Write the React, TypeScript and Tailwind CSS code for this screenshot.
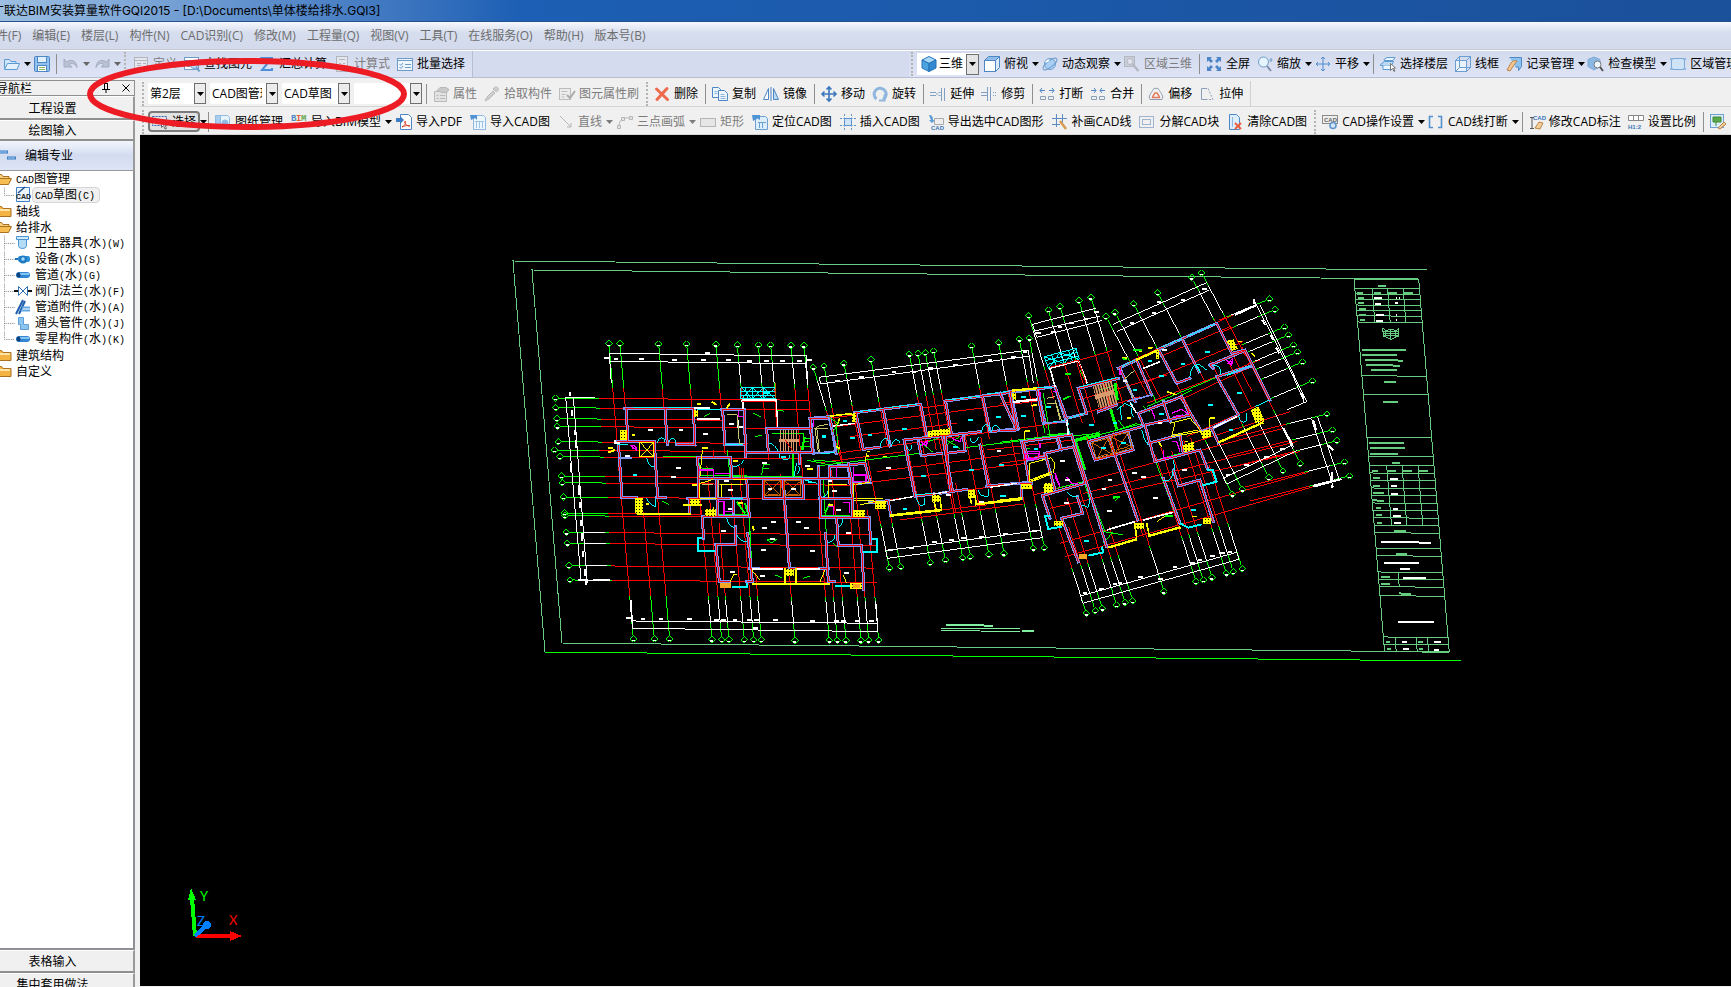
import React from 'react';

const BLUE = '#4f86c6';
const LIGHT = '#bcd9f2';

/* ---------- toolbar icons, all on a 16 x 16 grid ---------- */

const ICONS: Record<string, React.ReactNode> = {
  open: (
    <g stroke="#5b9bd5" fill="#cfe6fa">
      <path d="M.5 12.5v-9h5l1.5 2h5v2" />
      <path d="M.5 13.5l3-6h12l-2.5 6z" fill="#e3f1fd" />
    </g>
  ),
  save: (
    <g stroke={BLUE}>
      <rect x=".5" y=".5" width="15" height="15" rx="1" fill="#8fc1ec" />
      <rect x="3.5" y=".5" width="9" height="6" fill="#dff0fc" />
      <rect x="3.5" y="9.5" width="9" height="6" fill="#fff" />
      <path d="M5 11.5h6M5 13.5h6" stroke="#8ab86a" />
    </g>
  ),
  undo: <path d="M1 3v8h8L6 8.500c3-2 6-1 8 3C14 5 8 2.5 3.5 6z" fill="#b9c2d2" stroke="#a4aec0" />,
  redo: <path d="M15 3v8H7l3-2.5c-3-2-6-1-8 3C2 5 8 2.5 12.5 6z" fill="#b9c2d2" stroke="#a4aec0" />,
  define: (
    <g stroke="#b1b5bf" fill="#e4e6ec">
      <rect x="1.5" y="1.5" width="13" height="13" />
      <path d="M1.5 4.5h13M4 7.5h4M4 9.5h4M4 11.5h4M10 7.5h3M10 11.5h3" />
    </g>
  ),
  find: (
    <g stroke="#6d9cc9" fill="#fff">
      <rect x=".5" y="1.5" width="14" height="12" />
      <path d="M.5 4.5h14M3 7.5h3M3 10.5h3" />
      <circle cx="10" cy="9" r="3.5" fill={LIGHT} />
      <path d="M12.5 11.5l3 4" strokeWidth="2" />
    </g>
  ),
  sigma: <path d="M13 4V2H3l5 6-5 6h10v-2" fill="none" stroke="#4a90d9" strokeWidth="2" />,
  calc: (
    <g stroke="#b1b5bf" fill="#e4e6ec">
      <rect x="2.5" y=".5" width="11" height="15" />
      <path d="M5 3.5h6M5 7.5h2M9 7.5h2M5 10.5h2M9 10.5h2M5 13h2M9 13h2" />
    </g>
  ),
  batch: (
    <g stroke="#6d9cc9" fill="#eef6fd">
      <rect x=".5" y="2.5" width="15" height="12" />
      <path d="M.5 4.5h15M8 8.5h6M8 11.5h6M2.5 8l1.5 1.5L6 7M2.5 11l1.5 1.5L6 10" />
    </g>
  ),
  cube: (
    <g stroke="#2672b8" strokeLinejoin="round">
      <path d="M8 .5l7 3.5-7 3.5L1 4z" fill="#a8d8f7" />
      <path d="M1 4l7 3.5v8L1 12z" fill="#4ba3e0" />
      <path d="M15 4L8 7.5v8l7-3.5z" fill="#3389cf" />
    </g>
  ),
  topview: (
    <g stroke={BLUE} fill="#fff">
      <path d="M.5 4.5l4-4h11l-4 4z" fill="#8dbde8" />
      <path d="M11.5 4.5l4-4v11l-4 4z" fill="#dbeaf7" />
      <rect x=".5" y="4.5" width="11" height="11" />
    </g>
  ),
  orbit: (
    <g stroke="#6f9fce">
      <circle cx="8" cy="8" r="5.5" fill="#a9d0f2" />
      <ellipse cx="8" cy="8" rx="8.5" ry="3" fill="none" transform="rotate(-38 8 8)" />
      <path d="M4 6l3-2" stroke="#fff" strokeWidth="2" />
    </g>
  ),
  area3d: (
    <g stroke="#b3b8c3" fill="#c9cdd7">
      <rect x=".5" y=".5" width="10" height="10" />
      <circle cx="6" cy="5.5" r="3" fill="#dfe2ea" />
      <path d="M8.5 8l6 7" strokeWidth="2.5" />
    </g>
  ),
  full: (
    <path
      d="M1 1h5L4.5 2.5 7 5 5 7 2.5 4.5 1 6zM15 1v5l-1.5-1.5L11 7 9 5l2.5-2.5L10 1zM1 15v-5l1.5 1.5L5 9l2 2-2.5 2.5L6 15zM15 15h-5l1.5-1.5L9 11l2-2 2.5 2.5L15 10z"
      fill="#4c86c8"
    />
  ),
  zoom: (
    <g stroke="#6f9cc8">
      <circle cx="6.5" cy="6" r="5" fill="#e6f4fd" />
      <path d="M10 10l4 5" stroke="#7b8ea5" strokeWidth="2" />
      <path d="M14 2v4M12.5 4h3" />
    </g>
  ),
  pan: <path d="M8 1v14M1 8h14M6 3l2-2 2 2M6 13l2 2 2-2M3 6L1 8l2 2M13 6l2 2-2 2" fill="none" stroke="#4c8ccf" />,
  move: <path d="M8 1v14M1 8h14M5.5 3.5L8 1l2.5 2.5M5.5 12.5L8 15l2.5-2.5M3.5 5.5L1 8l2.5 2.5M12.5 5.5L15 8l-2.5 2.5" fill="none" stroke="#3b76bd" strokeWidth="1.6" />,
  floors: (
    <g stroke="#5d9bd3" fill="#eaf5fd">
      <path d="M4 3.5l3-2h8l-2 3H4z" />
      <path d="M.5 8.5l4-3h9l-2 4H.5z" fill={LIGHT} />
      <path d="M3 9.5v4h8v-4" />
      <path d="M10.5 7.5v7l2-2 1.5 3 1-.5-1.5-3h2z" fill="#fff" stroke="#777" />
    </g>
  ),
  wire: (
    <g stroke="#6b9fd4" fill="none">
      <rect x=".5" y="4.5" width="11" height="11" fill="#eaf3fc" />
      <rect x="4.5" y=".5" width="11" height="11" />
      <path d="M.5 4.5l4-4M11.5 4.5l4-4M.5 15.5l4-4M11.5 15.5l4-4" />
    </g>
  ),
  record: (
    <g>
      <path d="M3.5 1.5h12v9l-3 4V11h-3" fill="#8cc4ef" stroke={BLUE} />
      <path d="M1 14l4-7c1-2 4-3 6-2L8 9l-4 6z" fill="#f1c796" stroke="#b98245" />
    </g>
  ),
  check: (
    <g>
      <path d="M6 1l6 2.5v7L6 14 0 10.5v-7z" fill="#8bb9e3" stroke="#7fa9d3" />
      <circle cx="9.5" cy="8.5" r="3.5" fill="#eaf5fd" stroke="#777" />
      <path d="M12 11l3 4" stroke="#555" strokeWidth="2" />
    </g>
  ),
  area: (
    <g stroke="#7ba7d6" fill="#cfe3f6">
      <rect x="1.5" y="2.5" width="13" height="11" />
      <path d="M0 2h3v2H0zM13 2h3v2h-3zM0 12h3v2H0zM13 12h3v2h-3z" fill="#8db8e4" stroke="none" />
    </g>
  ),
  props: (
    <g stroke="#b9b9b9" fill="#e2e2e2">
      <path d="M1.5 5.5h12v10h-12z" />
      <path d="M4 4.5l3-3h6l3 2-2 3H9z" fill="#c9c9c9" />
      <path d="M3.5 9.5h2M7 9.5h5M3.5 12.5h2M7 12.5h5" />
    </g>
  ),
  pick: <path d="M1 15l2-4 6-6 2 2-6 6zM9 3l1.5-1.5c2-1.5 5 1 3.500 3L12.5 6z" fill="#cfcfcf" stroke="#b9b9b9" />,
  brush: (
    <g stroke="#bcbcbc" fill="#ececec">
      <rect x=".5" y="2.5" width="11" height="11" />
      <path d="M2.5 5.5h6M2.5 8.5h4M2.5 11h3" />
      <path d="M8 9l3 3 5-7" fill="none" stroke="#ababab" strokeWidth="2" />
    </g>
  ),
  remove: <path d="M2.5 3l11 10.5M13 2.5L3 13.5" stroke="#ef6a4d" strokeWidth="3" strokeLinecap="round" />,
  copy: (
    <g stroke={BLUE} fill="#eef6fd">
      <path d="M.5 1.5h6l3 3v7h-9z" />
      <path d="M6.5 4.5h6l3 3v7h-9z" />
      <path d="M8.5 8.5h4M8.5 10.5h5M8.5 12.5h5M2.5 5.5h3M2.5 7.5h3" stroke="#8ab4de" />
    </g>
  ),
  mirror: (
    <g stroke={BLUE}>
      <path d="M5.5 2.5v11h-5z" fill="#fff" />
      <path d="M10.5 2.5v11h5z" fill={LIGHT} />
      <path d="M8 1v14" />
    </g>
  ),
  rotate: (
    <g fill="none">
      <path d="M4.5 13A6 6 0 1 1 11 13.5" stroke="#8fb6de" strokeWidth="3" />
      <path d="M12.5 8.5V14.5H7" stroke="#8fb6de" strokeWidth="2" />
    </g>
  ),
  extend: <path d="M0 6.5h6M0 9.5h6M6 8h2M8.5 6.5h2M8.5 9.5h2M11.5 2v13M14.5 2v13" stroke="#7f9fc4" />,
  trim: <path d="M0 6.5h6M0 9.5h6M6.5 1v14M9.5 1v14M12 6.5h1M14 6.5h1M12 9.5h1M14 9.5h1" stroke="#7f9fc4" />,
  breakIt: (
    <g stroke={BLUE} fill="none">
      <path d="M6 4.5H1M3 2L1 4.5 3 7M10 4.5h5M13 2l2 2.5L13 7" />
      <path d="M1.5 10.5h5v3h-5zM9.5 10.5h5v3h-5z" stroke="#8aa0b8" />
    </g>
  ),
  join: (
    <g stroke={BLUE} fill="none">
      <path d="M1 4.5h5M4 2l2 2.5L4 7M15 4.5h-5M12 2l-2 2.5L12 7" />
      <path d="M1.5 10.5h5v3h-5zM9.5 10.5h5v3h-5z" stroke="#8aa0b8" />
    </g>
  ),
  offset: (
    <g fill="none">
      <path d="M2 13.5C0 10 3 7.5 4.5 4.5c1-3 6-3 7 0C13 7.5 16 10 14 13.5z" stroke="#8c9db3" />
      <path d="M4.5 11.5c0-2 2-3 2.5-4.5h2c.5 1.5 2.5 2.5 2.5 4.5z" stroke="#e27a5d" strokeWidth="1.5" />
    </g>
  ),
  stretch: (
    <g fill="none" stroke="#8a9fb8">
      <path d="M8 2.5H2.5v11H8" />
      <path d="M9 2.5l5 11H8" strokeDasharray="2 1.5" />
    </g>
  ),
  select: (
    <g fill="none">
      <rect x=".5" y="2.5" width="14" height="9" stroke="#2f66b0" strokeDasharray="2 1" />
      <path d="M9.5 5.5v8l2-2 1.5 3.5 1.5-.5-1.5-3.5h2.5z" fill="#fff" stroke="#666" />
    </g>
  ),
  sheets: (
    <g stroke="#8fbbe4">
      <path d="M.5 1.5h6v13h-6z" fill="#a9cdee" />
      <path d="M5.5 1.5h7l2 2v11h-9z" fill="#e7f3fd" />
      <circle cx="10" cy="9" r="3" fill="#8cbde8" />
    </g>
  ),
  bim: (
    <g fontFamily="Liberation Mono" fontSize="9" fontWeight="700">
      <text x="0" y="7" fill="#4f86c6">B</text>
      <text x="5" y="7" fill="#e0603f">I</text>
      <text x="10" y="7" fill="#6aa84f">M</text>
      <path d="M2 10.5h11M2 13.5h11" stroke="#9fb9d6" />
    </g>
  ),
  pdf: (
    <g>
      <path d="M4.5.5h8l3 3v12h-11z" fill="#fff" stroke={BLUE} />
      <path d="M0 4h4V2l4 4-4 4V8H0z" fill="#3e7cc4" />
      <path d="M6 13c4-2 4-5 3-6-1 3 2 5 5 5-3-1-6 0-8 1z" fill="none" stroke="#d9442b" />
    </g>
  ),
  importCad: (
    <g stroke="#8db8e2" fill="#eef6fd">
      <path d="M3.5 1.5h10l2 2v12h-12z" />
      <path d="M6.5 7v7M9.5 7v7M12.5 7v7M5 7.5h9" stroke="#9cc3e8" />
      <path d="M0 1h7v5L5 4 1 6z" fill="#4f94d4" stroke="none" />
    </g>
  ),
  line: <path d="M2 2l11 11M13 9v4H9" fill="none" stroke="#b5b5b5" />,
  arc: (
    <g fill="#e6e6e6" stroke="#b5b5b5">
      <path d="M2 12C2 6 6 3 13 4" fill="none" />
      <path d="M.5 11.5h3v3h-3zM4.5 3.5h3v3h-3zM12.5 2.5h3v3h-3z" />
    </g>
  ),
  rect: <rect x=".5" y="4.5" width="15" height="8" fill="#e6e6e6" stroke="#b5b5b5" />,
  locate: (
    <g stroke="#6fa0d2" fill="#dcedfb">
      <path d="M3.5 2.5h10l2 2v11h-12z" />
      <path d="M7.5 8v6M10.5 8v6M6 8.5h8" />
      <path d="M0 1h8v5L5.5 4.5 1 7z" fill="#4f94d4" stroke="none" />
    </g>
  ),
  insert: (
    <g stroke="#5f95cc">
      <path d="M4.5 0v16M11.5 0v16M0 4.5h16M0 11.5h16" strokeDasharray="2 1.5" />
      <rect x="4.5" y="4.5" width="7" height="7" fill="#cfe3f6" />
    </g>
  ),
  exportCad: (
    <g>
      <path d="M1 1c3 0 4 2 4 5h2L4 9 1 6h2z" fill="#5b9bd5" />
      <path d="M6.5 4.5h9v6h-9z" fill="#eee" stroke="#aaa" />
      <text x="3" y="15.5" fontSize="6" fontWeight="700" fontFamily="Liberation Sans" fill="#3974b8">CAD</text>
    </g>
  ),
  patch: (
    <g>
      <path d="M4.5 0v13M10.5 0v9M0 4.5h15M0 10.5h8" stroke="#5c8cc2" />
      <path d="M8 7l6 8" stroke="#d69a52" strokeWidth="2.5" />
    </g>
  ),
  explode: (
    <g fill="none" stroke="#4f78b0" strokeDasharray="1 1">
      <rect x=".5" y="2.5" width="14" height="11" />
      <rect x="3.5" y="5.5" width="8" height="5" />
    </g>
  ),
  clear: (
    <g>
      <path d="M2.5.5h7l3 3v12h-10z" fill="#dcedfb" stroke={BLUE} />
      <path d="M5.5 3v10" stroke="#8cb8e2" />
      <path d="M8 9l6 6M14 9l-6 6" stroke="#e9603f" strokeWidth="2" />
    </g>
  ),
  cadSet: (
    <g>
      <rect x=".5" y="1.5" width="15" height="8" fill="#eee" stroke="#8b8b8b" />
      <text x="2" y="8" fontSize="6" fontWeight="700" fontFamily="Liberation Sans" fill="#666">CAD</text>
      <circle cx="11" cy="11.5" r="3" fill="#d6e8f8" stroke="#5f95cc" strokeWidth="1.6" />
    </g>
  ),
  brackets: <path d="M5 2.5H1.5v11H5M10 2.5h3.500v11H10" fill="none" stroke="#5590cf" strokeWidth="1.6" />,
  annotate: (
    <g>
      <path d="M1 3.5h4M3 3.5v11M1 14.5h4" stroke="#555" />
      <text x="4" y="5.5" fontSize="6" fontWeight="700" fontFamily="Liberation Sans" fill="#3974b8">CAD</text>
      <path d="M6 14l4-6 4 1-3 6z" fill="#f3cf9c" stroke="#b98245" />
    </g>
  ),
  ratio: (
    <g>
      <path d="M.5 1.5h15v5H.5zM5.5 1.5v5M10.5 1.5v5" fill="#fff" stroke="#888" />
      <text x="0" y="15" fontSize="6" fontWeight="700" fontFamily="Liberation Sans Narrow, Liberation Sans" fill="#3974b8">H1:2</text>
    </g>
  ),
  edit: (
    <g>
      <rect x=".5" y=".5" width="13" height="13" fill="#dcedfb" stroke="#6ea0d2" />
      <path d="M3 3h8v5H3zM6 8v4" fill="#5aa84a" stroke="#3f8a34" />
      <path d="M8 14l6-6 2 2-6 5z" fill="#f3cf9c" stroke="#b98245" />
    </g>
  ),
  /* component tree */
  folder: (
    <g stroke="#a9701d">
      <path d="M.5 13.5v-10h5l1.5 2h8v8z" fill="#f3b444" />
      <path d="M2 7h12" stroke="#fde3a4" strokeWidth="2" />
    </g>
  ),
  folderOpen: (
    <g stroke="#a9701d">
      <path d="M.5 13.5v-10h5l1.5 2h6v3" fill="#f8cf7c" />
      <path d="M.5 13.5l3-6h12l-3 6z" fill="#f6bd52" />
    </g>
  ),
  draft: (
    <g>
      <path d="M1.5.5h13v14h-13z" fill="#eaf5fd" stroke="#3f80c8" />
      <path d="M3 6l7-6" stroke="#1f4f8f" strokeWidth="1.5" />
      <text x="1" y="12" fontSize="7" fontWeight="700" fontFamily="Liberation Sans" fill="#222">CAD</text>
    </g>
  ),
  sanitary: (
    <g stroke="#4c93d4">
      <path d="M1.5 1.5h12v3h-12z" fill="#cfe9fb" />
      <path d="M3.5 4.5v6c0 4 8 4 8 0v-6z" fill="#b3dcf7" />
    </g>
  ),
  device: (
    <g>
      <path d="M0 8h6" stroke="#1e74b8" strokeWidth="2" />
      <rect x="3" y="5" width="12" height="6" rx="2" fill="#2d8fd8" />
      <circle cx="8" cy="8.5" r="4" fill="#1f7ac2" />
      <circle cx="8" cy="8" r="1.8" fill="#a5dafa" />
    </g>
  ),
  pipe: (
    <g>
      <rect x="1" y="5" width="14" height="6" rx="3" fill="#2f86d4" />
      <path d="M5 7h9" stroke="#a5d8fa" strokeWidth="1.5" />
      <ellipse cx="3.5" cy="8" rx="2" ry="2.5" fill="#0f3f7c" />
    </g>
  ),
  valve: (
    <g>
      <path d="M-1 8h4M13 8h4" stroke="#111" strokeWidth="2" />
      <path d="M3.5 3.5v9l9-9v9z" fill="#fff" stroke="#2f6fb5" />
    </g>
  ),
  attach: (
    <g>
      <path d="M1 15L8 1M4 15l6-13" stroke="#1f5fae" strokeWidth="2" />
      <path d="M7 8.5h8M6 11.5h9" stroke="#5fa6e2" strokeWidth="2" />
    </g>
  ),
  elbow: <path d="M3.5 2.5h5v7h5v5h-8v-5h-2z" fill="#8cc4f0" stroke="#5fa0da" />,
};

function Icon({ name }: { name: string }) {
  return (
    <svg viewBox="0 0 16 16" className="h-4 w-4 shrink-0 overflow-visible" aria-hidden="true">
      {ICONS[name]}
    </svg>
  );
}

function Caret() {
  return (
    <svg viewBox="0 0 7 4" className="h-1 w-[7px] shrink-0" aria-hidden="true">
      <path d="M0 0h7L3.5 4z" fill="currentColor" />
    </svg>
  );
}

interface ToolProps {
  icon: string;
  label: string;
  off?: boolean;
  caret?: boolean;
}

function Tool({ icon, label, off, caret }: ToolProps) {
  return (
    <button
      disabled={off}
      className={`flex h-5 shrink-0 items-center gap-1 ${caret ? 'pr-[3px]' : 'pr-[7px]'} ${off ? 'text-[#7c7c7c]' : 'text-black'}`}
    >
      <Icon name={icon} />
      <span>{label}</span>
      {caret && <Caret />}
    </button>
  );
}

const Tools = ({ items }: { items: ToolProps[] }) => (
  <>
    {items.map((item) => (
      <Tool key={item.label} {...item} />
    ))}
  </>
);

const Divider = () => <span className="mr-[6px] h-5 w-px shrink-0 bg-[#8e8e8e]" />;
const Grip = () => <span className="mr-1 h-6 w-0 shrink-0 border-l-2 border-dotted border-[#b4b4b4]" />;

function Picker({ label, value, width }: { label: string; value: string; width: string }) {
  return (
    <label className="mr-1 flex h-[22px] shrink-0 items-center">
      <select aria-label={label} defaultValue={value} className={`h-[21px] appearance-none bg-white pl-[2px] pr-1 text-black ${width}`}>
        <option>{value}</option>
      </select>
      <span className="flex h-[21px] w-3 items-center justify-center border border-[#707070] bg-[#ececec]">
        <Caret />
      </span>
    </label>
  );
}

const MENUS = ['文件(F)', '编辑(E)', '楼层(L)', '构件(N)', 'CAD识别(C)', '修改(M)', '工程量(Q)', '视图(V)', '工具(T)', '在线服务(O)', '帮助(H)', '版本号(B)'];

/* ---------- navigation tree ---------- */

interface Node {
  icon: string;
  label: string;
  child?: boolean;
  last?: boolean;
  active?: boolean;
}

const TREE: Node[] = [
  { icon: 'folderOpen', label: 'CAD图管理' },
  { icon: 'draft', label: 'CAD草图(C)', child: true, last: true, active: true },
  { icon: 'folder', label: '轴线' },
  { icon: 'folderOpen', label: '给排水' },
  { icon: 'sanitary', label: '卫生器具(水)(W)', child: true },
  { icon: 'device', label: '设备(水)(S)', child: true },
  { icon: 'pipe', label: '管道(水)(G)', child: true },
  { icon: 'valve', label: '阀门法兰(水)(F)', child: true },
  { icon: 'attach', label: '管道附件(水)(A)', child: true },
  { icon: 'elbow', label: '通头管件(水)(J)', child: true },
  { icon: 'pipe', label: '零星构件(水)(K)', child: true, last: true },
  { icon: 'folder', label: '建筑结构' },
  { icon: 'folder', label: '自定义' },
];

// latin letters take half the width of a chinese one
function HalfWidth({ text }: { text: string }) {
  return (
    <>
      {text.split(/([A-Z()]+)/).map((part, i) =>
        /^[A-Z()]/.test(part) ? (
          <span key={i} className="font-['Liberation_Mono','Noto_Sans_CJK_SC',monospace] text-[10px]">{part}</span>
        ) : (
          part
        )
      )}
    </>
  );
}

function TreeRow({ node }: { node: Node }) {
  return (
    <li className="flex h-4 items-center whitespace-nowrap">
      {node.child ? (
        <svg viewBox="0 0 12 16" className="ml-1 h-4 w-[11px] shrink-0" aria-hidden="true">
          <path d={node.last ? 'M.5 0v8.5h12' : 'M.5 0v16M.5 8.5h12'} fill="none" stroke="#777" strokeDasharray="1 1" />
        </svg>
      ) : (
        <span className="-ml-1" />
      )}
      <Icon name={node.icon} />
      <button
        className={`ml-px flex h-4 items-center leading-4 ${
          node.active ? 'rounded-sm border border-[#d5d5d5] bg-[#f0f0f0] pl-[2px] pr-1' : 'px-[3px]'
        }`}
      >
        <span>
          <HalfWidth text={node.label} />
        </span>
      </button>
    </li>
  );
}

function Sidebar() {
  const tab = 'flex shrink-0 items-center justify-center border-b-2 border-r-2 border-t border-b-[#8f8f8f] border-r-[#9a9a9a] border-t-white bg-[#f0f0f0] pr-7';
  return (
    <aside className="flex w-[135px] shrink-0 flex-col overflow-hidden bg-[#f0f0f0] font-['Noto_Sans_CJK_SC',sans-serif] text-black">
      <header className="mt-px flex h-4 shrink-0 items-center border border-l-0 border-[#8f8f8f]">
        <span className="-ml-1">导航栏</span>
        <button aria-label="固定" className="ml-auto mr-3">
          <svg viewBox="0 0 8 10" className="h-[10px] w-2">
            <path d="M2 .5h4M2.5 1v5M5.5 1v5M0 6.5h8M4 7v3" stroke="#000" fill="none" />
          </svg>
        </button>
        <button aria-label="关闭" className="mr-1">
          <svg viewBox="0 0 8 8" className="h-2 w-2">
            <path d="M.5.5l7 7M7.5.5l-7 7" stroke="#000" />
          </svg>
        </button>
      </header>
      <button className={`${tab} h-6`}>工程设置</button>
      <button className={`${tab} h-[21px]`}>绘图输入</button>
      <div className="flex h-[30px] shrink-0 items-center border-b border-r-2 border-[#9a9a9a] bg-gradient-to-b from-[#f2f5fc] via-[#d3dcf0] to-[#dde4f6] pt-px font-['Open_Sans','Noto_Sans_CJK_SC',sans-serif]">
        <svg viewBox="0 0 16 16" className="h-4 w-4" aria-hidden="true">
          <path d="M0 4h8M7 10h9" stroke="#3c7cc4" strokeWidth="3" />
          <path d="M0 4h7M8 10h7" stroke="#a5d0f5" />
        </svg>
        <span className="ml-[9px]">编辑专业</span>
      </div>
      <ul className="min-h-0 flex-1 border-b-2 border-r-2 border-[#8f8f96] bg-white">
        {TREE.map((node) => (
          <TreeRow key={node.label} node={node} />
        ))}
      </ul>
      <button className={`${tab} h-[23px]`}>表格输入</button>
      <button className={`${tab} -mb-[9px] h-[23px]`}>集中套用做法</button>
    </aside>
  );
}

/* ---------- drawing ---------- */

type Pt = [number, number, number?];

// a family of parallel axes: bubble, green leader, white extension, red centre line
interface Run {
  dir: [number, number];
  green: number;
  white: number;
  red: number;
  at: Pt[];
}

function Axes({ dir, green, white, red, at }: Run) {
  const seg = (a: number, b: (p: Pt) => number) =>
    at.map((p) => `M${p[0] + dir[0] * a},${p[1] + dir[1] * a}L${p[0] + dir[0] * b(p)},${p[1] + dir[1] * b(p)}`).join('');
  return (
    <g fill="none" strokeWidth="3">
      <path stroke="#f00" d={seg(white, (p) => p[2] ?? red)} />
      <path stroke="#fff" d={seg(green, () => white)} />
      <path stroke="#0f0" d={seg(10, () => green) + seg(white, () => white + 12)} />
      <path stroke="#0f0" d={at.map(([x, y]) => `M${x - 10},${y}l10,-10l10,10l-10,10z`).join('')} />
      <path stroke="#fff" strokeWidth="4" d={at.map(([x, y]) => `M${x - 5},${y + 5}h9`).join('')} />
    </g>
  );
}

function Walls({ d }: { d: string }) {
  return (
    <g fill="none">
      <path d={d} stroke="#7f93f7" strokeWidth="9" strokeLinecap="square" />
      <path d={d} stroke="#f00" strokeWidth="3" />
    </g>
  );
}

const Stroke = ({ c, d, w = 3 }: { c: string; d: string; w?: number }) => <path d={d} stroke={c} strokeWidth={w} fill="none" />;

// short dashes standing for room names and dimension figures
const Marks = ({ c, at }: { c: string; at: Pt[] }) => (
  <path d={at.map(([x, y]) => `M${x - 7},${y}h14`).join('')} stroke={c} strokeWidth="6" />
);

function BlockA() {
  return (
    <g transform="translate(500 250) scale(.3333)">
      <Axes dir={[0.083, 1]} green={122} white={122} red={300} at={[[327, 281, 460], [360, 281, 290], [476, 282, 300], [560, 282, 310], [648, 283, 330]]} />
      <Axes dir={[0.09, 1]} green={50} white={115} red={300} at={[[712, 285, 160], [775, 285, 345], [812, 285, 160], [873, 286, 400], [912, 286, 240]]} />
      <Axes dir={[-0.085, -1]} green={50} white={118} red={300} at={[[400, 1167, 520], [636, 1168, 470], [665, 1169, 520], [687, 1169, 350], [733, 1169, 470], [761, 1169, 520], [784, 1169, 200], [885, 1171, 500], [988, 1171, 370], [1012, 1171, 180], [1038, 1171, 510], [1083, 1171, 370], [1106, 1171, 470], [1136, 1171, 390]]} />
      <Axes dir={[-0.085, -1]} green={118} white={118} red={380} at={[[463, 1167, 380], [509, 1167, 520]]} />
      <Axes dir={[1, 0.009]} green={120} white={120} red={750} at={[[166, 444, 760], [167, 473, 760], [171, 506, 500], [172, 529, 760], [175, 575, 570], [164, 600, 600], [180, 620, 720], [184, 678, 770], [187, 698, 870], [191, 741, 870], [193, 789, 410], [195, 797, 870]]} />
      <Axes dir={[1, 0.008]} green={50} white={115} red={900} at={[[199, 847, 910], [202, 880, 930], [207, 947, 915], [210, 990, 920]]} />
      <Stroke c="#fff" d="M328,310L920,318M328,334L920,341M197,440L243,990M220,440L262,1000M393,1113L1130,1120M397,1135L1133,1145M395,1050L397,1135M918,318L924,405M195,442H285M1128,1060L1134,1145M328,310L334,400" />
      <Stroke c="#fff" w={6} d="M210,425v14M217,480v18M224,540v15M227,570v25M213,640v25M236,705v30M240,755v18M243,810v18M246,850v22M250,903v18M255,957v20M257,990v15M235,990h30M280,990h50" />
      <Marks c="#fff" at={[[319, 323], [348, 327], [424, 327], [523, 330], [610, 330], [686, 330], [622, 309], [748, 333], [800, 333], [848, 333], [898, 333], [928, 330], [385, 1104], [429, 1107], [483, 1107], [568, 1107], [650, 1110], [671, 1110], [705, 1110], [748, 1110], [770, 1110], [826, 1110], [937, 1113], [1010, 1113], [1031, 1113], [1071, 1113], [1115, 1113], [766, 1134]]} />
      <Stroke c="#0f0" d="M490,619H590M597,640L600,678H740M682,600L690,680M700,680H885M745,760L758,1000M748,800L758,1000M970,690L985,960M655,795H740M965,797H1050M815,550H910V600M900,590H930M910,565H930M910,575H928M790,645L785,675M790,645H810M790,655H806M940,630L1050,640M920,630L990,645M597,640L605,655H640" />
      <Stroke c="#0f0" w={6} d="M880,610V680M700,680H905M660,797H735M970,797H1045M735,760L745,795M975,790L990,760M915,560L905,600M710,755L735,790" />
      <Stroke c="#0f0" d="M760,490L783,500M830,480L853,484M612,500L630,490M485,752L508,764M800,870L815,878L830,868H800M825,975L845,983M910,985L930,978M1010,890L1000,880M985,500L1015,520L1000,545M765,560L785,555" />
      <Stroke c="#0ff" d="M610,863H595V903H645M695,1012H740V995M1112,868H1130V907H1085M1005,1008H1055M366,742H408M745,607H800" w={6} />
      <Stroke c="#0ff" d="M472,580C475,560 492,558 495,575M505,585C510,555 530,565 528,580M440,625C445,645 455,650 465,655M440,745C450,765 460,768 466,770V745M680,805C685,825 695,832 706,832M712,855C715,870 730,875 740,875M1030,805C1025,830 1015,832 1008,835M980,878C990,878 1003,875 1005,855M805,580C825,580 835,600 840,625M845,625C855,632 868,632 870,615M985,720C982,740 972,742 962,742M700,650C712,650 725,645 730,630M890,640L880,690M895,650C905,655 895,670 890,672M915,690L950,700" />
      <Stroke c="#0ff" d="M722,413H827V447H722zM722,425H827M722,436H827M735,413L745,447M757,413V447M790,413V447M725,413L757,447L790,413L825,447M757,413L725,447M825,413L790,447L757,413" />
      <Walls d="M375,475H583M378,475L384,572M495,477L502,583M580,475L585,583M350,575H465M355,575L366,742M463,575L473,742M366,742H410M470,742H498M530,583H585M665,480H733L737,620M668,480L675,585H737M737,607H805M800,537H935M800,537L805,607H938M930,505L937,607M930,505H985M592,623H692M592,623L597,685M692,625L695,683M597,685H1050M597,685V745M563,745H740M568,745V790M740,685L748,800M650,690L652,800M608,800H745M608,800L610,865M700,750V790M648,885H708V830M648,885L658,995H690M743,850L757,995H740M750,955H775M790,690V747H912L908,685M850,690L868,950M958,690L963,803H1108L1112,880M1055,690L1058,800M960,747H1058M960,955H985M977,850L985,995H1005M1010,803L1015,888H1085L1092,1020M955,650V685M900,607V640M990,650H1045M990,650V685M1045,640L1055,690M870,955H885" />
      <Stroke c="#0ff" d="M400,472H490M505,472H570M384,583H350M590,480H660M675,583H730M690,745H730" />
      <Stroke c="#fff" w={6} d="M727,450H828L832,530M727,450L730,478M590,508H660M582,474H630M755,957H850M890,957H960M345,570V580H360M715,510V530H728" />
      <Stroke c="#f00" d="M725,454H825L830,530M590,511H660M730,655V690M603,765V795M640,620V600M725,655V690" />
      <Stroke c="#ff0" w={6} d="M410,792H572M755,1003H990M855,955V1003M888,955V1003M410,745V792M635,455L650,465M680,475L690,460M590,462H603M605,595H625M550,765H605M577,705H590M395,555H405M325,608L345,600M325,595H340M758,828L762,842M437,763H447M920,658H940M700,632H715M985,765H998M715,760H728" />
      <Stroke c="#ff0" d="M600,680L607,600M598,745V700L620,695L640,688M420,577H462V621H420zM420,577L462,621M462,577L420,621M665,703V740M740,690H700M650,745H600M640,800V770M990,500L1060,490M690,995L700,975H712M1030,975L1040,1000M975,960L960,995M755,960L780,990M660,703H730M985,745V703H1040M1060,700L1060,740" />
      <path
        d="M360,540h22v30h-22zM406,745h22v45h-22zM570,748h30v20h-30zM615,778h34v20h-34zM853,957h30v20h-30zM1060,780h34v20h-34zM582,480h12v20h-12zM1050,1000h36v18h-36zM1055,490h10v24h-10z"
        fill="url(#hatch)"
      />
      <path d="M660,1000h32v14h-32zM1060,1003h20v12h-20z" fill="#f5a623" />
      <Stroke c="#c86000" d="M793,692H843V737H793zM793,692L843,737M843,692L793,737M855,692H903V737H855zM855,692L903,737M903,692L855,737M805,735H833M867,735H893M827,400L825,445" w={3} />
      <Stroke c="#c86000" d="M803,736H835M865,736H895" w={7} />
      <Stroke c="#d99a6c" d="M842,541V605M850,541V605M858,541V605M866,541V605M874,541V605M882,541V605M890,541V605" />
      <rect x="838" y="567" width="60" height="10" fill="#d99a6c" />
      <Stroke c="#f00" d="M855,570L880,605" />
      <Stroke c="#f0f" d="M598,660H640V680M645,670H690M655,755H672V795M675,785H700M1030,757H1048V790M985,770H1000V795M1010,650V680M1060,650V690M940,510V530M715,482V500H728M390,585L412,602M398,585L412,595M395,595H410" w={4} />
      <Stroke c="#c8c46a" d="M680,495H712L718,580H730M945,535H985M945,535L955,608M985,690V703M605,703H640M655,690V740" />
      <Stroke c="#7f93f7" w={5} d="M358,624H395M945,610L1008,603M985,500L1008,603" />
      <Marks c="#fff" at={[[451, 540], [543, 540], [616, 552], [535, 654], [520, 680], [694, 521], [382, 618], [670, 843], [820, 816], [793, 834], [895, 816], [919, 834], [937, 903], [790, 900], [697, 966], [787, 978], [691, 720], [690, 777], [922, 648], [793, 638], [1016, 779], [1046, 849], [1039, 969], [810, 717], [880, 717], [1003, 723], [680, 694], [990, 694], [818, 866]]} />
      <Marks c="#0ff" at={[[405, 675], [797, 429], [850, 620], [972, 560], [930, 695]]} />
    </g>
  );
}

function BlockB() {
  return (
    <g transform="translate(800 320) scale(.3333)">
      <Axes dir={[0.19, 1]} green={45} white={115} red={280} at={[[72, 138, 290], [132, 130, 260], [213, 119, 260], [328, 103, 280], [354, 101, 290], [376, 98, 480], [401, 93, 240], [515, 78, 280], [596, 68, 260], [658, 58, 310], [688, 55, 270]]} />
      <Axes dir={[0.3, 1]} green={40} white={120} red={300} at={[[40, 142, 300]]} />
      <Axes dir={[-0.2, -1]} green={50} white={120} red={250} at={[[268, 744, 330], [302, 740, 200], [391, 728, 360], [436, 720, 370], [488, 713, 370], [511, 710, 220], [567, 704, 360], [612, 700, 350], [700, 685, 330], [733, 683, 190]]} />
      <Stroke c="#fff" d="M57,172L687,90M62,192L690,108M257,692L722,631M262,715L727,653M257,692L262,715M722,631L727,653M57,172L62,192M685,90L700,190" />
      <Stroke c="#f00" d="M90,322L720,242M45,300L165,285M110,400L800,305M60,428L310,395M230,455L660,400M210,487L680,430M265,540L700,485M425,570L560,555M150,350L470,310M560,390L860,355M300,600L670,552M0,325H30M360,265L435,255" />
      <Stroke c="#0f0" d="M60,437L360,400M495,383L665,362L900,340M108,310L115,400M712,215L735,340M740,345L800,340M820,360L900,335M830,420L870,540M360,375L420,352M430,380L480,350M665,390L690,385M365,370L400,398M440,360L480,385" />
      <Walls d="M32,295L90,290M32,295L40,400M90,290L108,400M165,278L362,253M168,280L190,388L240,381M250,268L270,378M362,253L380,345M435,243L765,200L798,302M437,245L455,345M548,228L570,335M632,215L655,325L575,335M312,360L540,335M312,360L345,530M427,345L458,515M435,345L452,515M540,375L565,498M355,365L362,400M365,407L425,400M440,400L495,393M490,350L495,390M210,548L265,542L272,585M350,528L400,522M420,520L500,508M560,498L690,487M665,490V535M665,365L688,487M665,365L770,352L780,385M712,210L735,308M675,418L735,410M195,430L210,487L150,492L145,430M90,440L195,430" />
      <Stroke c="#0ff" d="M175,275L245,266M265,263L350,252M445,240L540,228M560,222L625,214M725,205L760,200M45,402L105,398M740,308L795,302M345,525L395,520M240,378C245,350 268,350 270,372M275,378C280,350 298,360 300,370M545,335C550,305 570,310 570,332M575,335C580,305 598,320 600,328M350,535C355,560 370,560 375,550V535M535,510C540,530 555,530 565,528V508M510,355C515,375 530,370 535,350M320,375C322,395 335,400 335,375M805,310C800,335 810,340 815,345" w={3} />
      <Stroke c="#fff" w={4} d="M100,318L165,310M635,248L712,240M270,542L340,530M570,502L650,490M400,522L440,516" />
      <Stroke c="#ff0" w={8} d="M270,587L425,570M525,553L665,537" />
      <Stroke c="#ff0" w={5} d="M90,288L165,280M635,215L710,208M398,525L408,570M418,525L425,570M505,510L515,552M520,508L530,552M200,395L210,395M675,335H690M108,380L120,385M695,258L705,255M120,295L108,320M250,410H262M197,408H208" />
      <Stroke c="#ff0" d="M155,495L160,540L260,545M158,535H250M155,495L210,487M200,400L195,425M675,355V335M688,430L750,415M688,430L690,485L750,458M690,480L750,462M180,555L225,545" />
      <path
        d="M225,545h34v22h-34zM395,525h26v22h-26zM503,510h22v24h-22zM665,490h30v18h-30zM732,490h28v24h-28zM385,333l65,-8v18l-65,8zM155,280h12v25h-12zM635,217h14v22h-14zM160,572h34v18h-34z"
        fill="url(#hatch)"
      />
      <Stroke c="#f0f" w={4} d="M160,465H198V485M160,465V485H190M362,365L380,378L382,360M365,378L378,365M455,355L480,365L485,350M678,395H718V412M678,395V412H705M765,470L780,500M720,370V385" />
      <Stroke c="#c8c46a" d="M50,320L58,395M50,320L85,312M765,240L785,302M740,235L765,230" />
      <Marks c="#fff" at={[[112, 184], [185, 172], [282, 157], [342, 155], [392, 145], [467, 135], [570, 120], [640, 112], [675, 95], [272, 690], [335, 683], [403, 666], [454, 660], [490, 655], [545, 650], [617, 643], [703, 634], [265, 443], [597, 392], [545, 545], [445, 525]]} />
      <Marks c="#0ff" at={[[135, 303], [157, 354], [210, 345], [313, 327], [511, 299], [596, 290], [670, 231], [670, 287], [72, 349], [315, 566], [371, 467], [515, 449], [605, 435], [610, 528], [745, 260], [467, 380], [708, 387]]} />
    </g>
  );
}

function BlockC() {
  return (
    <g transform="translate(1000 260) scale(.3333)">
      <Stroke c="#f00" d="M940,680L555,790L195,890M925,637L180,850M900,575L150,745M850,505L100,705M890,545L250,700M870,455L540,560M810,420L560,530M780,300L440,430M730,245L430,370M700,165L400,300M755,320L540,420M690,200L480,290M240,300L335,272M0,430L110,415M235,420L500,345M200,475L420,410M70,600L170,575M0,610L90,598" />
      <Axes dir={[0.3, 1]} green={45} white={150} red={300} at={[[86, 167, 250], [145, 150, 340], [180, 140, 350], [237, 122, 330], [273, 112, 330]]} />
      <Axes dir={[0.53, 1]} green={40} white={120} red={260} at={[[318, 170, 240], [345, 157, 290], [401, 131, 330], [473, 98, 270], [575, 52, 340], [605, 39, 250]]} />
      <Axes dir={[-0.5, -1]} green={45} white={150} red={300} at={[[697, 703, 290], [727, 688, 200], [807, 653, 350], [849, 633, 330], [901, 611, 350]]} />
      <Axes dir={[-1, 0.42]} green={50} white={115} red={160} at={[[808, 117, 150], [825, 149, 160], [853, 201, 130], [865, 225, 135], [880, 255, 135], [892, 276, 130], [908, 306, 130], [937, 363, 130]]} />
      <Axes dir={[-1, 0.25]} green={45} white={110} red={300} at={[[981, 462, 300], [997, 510, 320], [1011, 542, 330], [1034, 606, 300], [1049, 648, 300]]} />
      <Axes dir={[-0.32, -1]} green={50} white={125} red={300} at={[[259, 1060, 370], [286, 1052, 250], [307, 1045, 330], [350, 1035, 370], [375, 1027, 400], [398, 1022, 220], [492, 994, 480], [588, 965, 380], [610, 960, 400], [636, 952, 380], [679, 940, 400], [700, 935, 400], [727, 926, 310]]} />
      <Stroke c="#fff" d="M97,193L287,145M105,213L300,168M110,232L305,182M340,193L620,68M350,215L628,90M670,655L878,555M680,672L890,572M762,120L880,350L912,425M780,135L920,425M935,478L1000,680M953,470L1018,660M242,1008L710,877M248,1030L717,898M242,1008L248,1030M710,877L717,898M670,655L680,672M860,450L920,425M845,500L880,560M97,193L110,232" />
      <Stroke c="#fff" w={6} d="M705,165L770,135M940,680L1025,657M762,118V132M850,505L878,555M787,180L795,195M812,225L820,240M828,262L838,280M880,345L886,360M905,400L912,415M940,480L948,510M985,555L1000,570M996,635V660M995,675V685" />
      <Stroke c="#0f0" d="M220,545L430,490M440,440L690,335M545,405L575,390M220,565L315,815M465,600L525,760M350,510L410,490M240,330L260,370M425,330L470,430M350,370L350,430M300,390L345,375M300,402L345,390M0,547L215,520M80,540L130,530M470,600L540,580M170,685L250,665M340,715L360,710L345,722M310,815L370,825M130,400L150,530M310,850L340,815M355,480L385,520M430,440L450,455" />
      <Stroke c="#0f0" w={9} d="M332,448L350,508M225,542L300,525M225,540L255,630M345,370L352,420" />
      <Walls d="M475,268L650,190L695,280L735,270L810,420M475,268L530,370L570,355M548,240L597,335M630,315L735,272M630,315L640,325M650,350L715,465M650,350L755,318M715,465L635,505L655,548M545,415L605,515L635,505M355,325L410,300L455,405M360,325L405,425M235,385L355,355M235,385L260,460L200,475L165,380L110,387L130,490M295,455L350,435M415,460L545,410L570,465L435,495L465,605L600,570L622,625M415,460L430,495M445,550L540,525L550,580M490,425L510,485M520,630L535,678L600,660L640,785M490,655L540,790M265,545L285,600L400,570L385,520M325,530L345,585L413,780M265,545L425,500M305,812L320,860M70,545L215,525L320,860M70,545L85,600L140,590M135,580L220,560L255,670L127,707M135,580L165,690M127,707L150,775M185,775L235,905M185,775L248,760L232,710M60,672H95M175,535L185,570M0,400L50,510L0,512M30,395L50,505M30,395L110,387" />
      <Stroke c="#0ff" d="M485,262L545,236M560,230L645,192M680,345L755,318M765,440L808,420M110,383H160M365,320L405,300M240,380L350,353M205,475L255,460M570,350C570,320 590,310 600,315L620,330M640,315C655,315 665,325 660,345M715,465C720,490 735,490 740,480V460M445,555C430,540 430,520 425,510M490,660C510,670 520,650 518,630M245,735L265,742L270,715M200,695C210,710 225,712 235,708M200,490C205,515 215,520 205,525M360,440L365,480M395,430C400,440 390,460 400,470M520,600L525,630M350,450L375,430L395,440" w={3} />
      <Stroke c="#0ff" w={6} d="M150,768H135L145,807L185,800M620,630H638L650,665L605,677M265,887L310,877L305,860M540,790L565,803L605,793M588,315L600,335M680,345L750,320" />
      <Stroke c="#0ff" d="M133,290L228,265L238,298L145,325zM137,302L232,277M140,314L235,288M155,284L168,318M180,278L193,311M205,271L218,304M133,290L193,311L228,265M145,325L180,278L238,298" />
      <Stroke c="#fff" w={5} d="M150,325L235,302L262,370M150,325L165,380M200,480L205,525M320,810L405,785M430,780L520,757M430,325L480,305M640,503L710,470M40,425L110,418M390,428L410,460" />
      <Stroke c="#f00" d="M150,322L235,300L258,370M415,790L430,830M260,530L270,560" />
      <Stroke c="#ff0" w={7} d="M325,863L410,838M445,828L542,802M655,548L790,487M408,300L475,270M35,392L110,385M0,722L65,715" />
      <Stroke c="#ff0" w={5} d="M405,790L410,838M440,790L448,828M755,450L770,490M775,445L792,485M630,475H645M500,395L530,405M410,270L425,275M365,295H380M445,265L460,262M75,512H90M100,435H110M755,280L765,290M555,545H565M575,770H590M380,475H392M475,545L485,560M715,245H725" />
      <Stroke c="#ff0" d="M510,490L570,475L605,515M515,530L600,515M518,525L595,510M90,610L135,598M90,610V660L155,635M95,665L155,642M150,590L165,610L160,640M75,540V512M525,490L515,530M630,500V475M470,785L500,765" />
      <path
        d="M600,515l30,-8l5,22l-26,8zM755,448l20,-8l16,40l-20,8zM548,555l35,-10v24l-30,8zM130,678l28,-4v22l-26,4zM162,784h26v14h-26zM403,788h30v18h-30zM680,243l20,-6l14,30l-18,6zM62,672h30v16h-30zM468,270h10v28h-10zM608,774h26v18h-26z"
        fill="url(#hatch)"
      />
      <path d="M236,882h24v14h-24z" fill="#f5a623" />
      <path d="M278,378L335,362L352,430L297,446z" fill="url(#stairs)" />
      <path d="M283,406L340,390L343,402L287,418z" fill="#d99a6c" />
      <Stroke c="#c86000" w={3} d="M275,548L325,535L338,583L290,597zM275,548L338,583M325,535L290,597M332,530L385,517L397,562L345,580zM332,530L397,562M385,517L345,580M295,590L325,582M350,570L385,560" />
      <Stroke c="#f0f" w={4} d="M75,580H115V595M75,580L80,597H110M515,460L545,448L565,462M520,470L550,465M165,640L180,680M200,650L215,670H235M515,545H530L540,575M490,570V595L515,590M680,300L695,315L698,295M682,312L695,298M455,450L465,475M120,395V410M160,395H170M360,330V345" />
      <Stroke c="#c8c46a" d="M375,355L400,415M375,355L405,330M165,420L180,480M140,430H165" />
      <Stroke c="#7f93f7" w={5} d="M700,340L755,320M380,425L455,405M130,490L200,485" />
      <Marks c="#fff" at={[[160, 215], [215, 190], [258, 178], [290, 155], [115, 220], [180, 200], [396, 188], [462, 160], [477, 127], [549, 119], [614, 88], [684, 645], [740, 615], [800, 590], [848, 567], [255, 1000], [305, 986], [345, 972], [360, 968], [422, 952], [482, 957], [525, 920], [578, 908], [600, 900], [638, 888], [668, 880], [690, 876], [403, 640], [430, 652], [330, 661], [312, 687], [466, 714], [328, 752], [554, 630], [200, 730], [480, 490], [187, 603], [493, 270], [203, 660], [375, 362]]} />
      <Marks c="#0ff" at={[[549, 311], [622, 277], [484, 349], [450, 303], [718, 398], [632, 435], [693, 511], [405, 391], [275, 496], [310, 565], [370, 548], [145, 441], [70, 412], [70, 467], [260, 843], [580, 750], [108, 567], [485, 463], [345, 490], [8, 708]]} />
      <Stroke c="#0f0" w={5} d="M195,342H213M190,418L212,408M340,712H360M400,270H425M495,768H520M365,295L380,300" />
    </g>
  );
}

const TB_ROWS = [57, 85, 102, 118, 135, 151, 167, 186, 347, 403, 532, 589, 616, 639, 661, 684, 706, 729, 751, 773, 796, 818, 865, 887, 936, 958, 980, 1007, 1131, 1153, 1175];

function TitleBlock() {
  const edge = (y: number) => 72 + (y - 57) * 0.082;
  const col = (dx: number, y1: number, y2: number) => `M${edge(y1) + dx},${y1}L${edge(y2) + dx},${y2}`;
  return (
    <g transform="translate(1330 260) scale(.3333)" fill="none" stroke="#66cc80" strokeWidth="3">
      <path d={TB_ROWS.map((y) => `M${edge(y)},${y}l194,2`).join('')} />
      <path d={col(0, 57, 1175) + col(194, 57, 1175)} />
      <path d={col(52, 85, 186) + col(98, 85, 186) + col(145, 85, 186)} />
      <path d={col(52, 616, 796) + col(98, 616, 796) + col(146, 616, 796)} />
      <path d={col(60, 936, 980) + col(35, 1131, 1175) + col(98, 1131, 1175) + col(132, 1131, 1175)} />
      <path d="M158,205L168,212L183,208L198,212L206,205V228L183,238L160,228zM160,215H205M160,222H205M168,212V232M183,208V238M198,212V232M160,228H205" />
      <path
        strokeWidth="6"
        d="M144,78h24M80,99h18M131,99h22M174,99h26M219,99h30M85,114h17M84,129h18M87,147h20M87,165h20M90,181h15M96,270h132M96,285h105M105,300h99M204,303h15M108,315h81M189,318h21M123,330h78M162,366h36M159,426h45M117,549h105M120,564h105M120,582h84M186,609h24M126,633h18M172,633h26M217,633h28M266,633h28M129,654h20M129,678h20M129,699h33M128,720h13M141,723h20M138,744h15M138,765h17M141,789h15M192,813h36M198,882h33M153,951h27M153,972h27M207,999h6M213,1002h30M168,1146h12M171,1167h12M264,1146h15M267,1167h12"
      />
      <path
        stroke="#fff"
        strokeWidth="6"
        d="M132,114h24M135,132h18M138,165h24M138,183h20M198,113h3M207,113h3M196,130h9M198,165h4M198,180h3M180,657h24M183,678h18M183,702h20M189,747h15M189,768h24M192,789h21M153,846h114M267,849h36M162,909h105M210,927h30M219,954h69M204,1086h108M216,1146h15M219,1167h18M312,1146h21M312,1170h15"
      />
    </g>
  );
}

function Drawing() {
  return (
    <svg viewBox="140 135 1591 851" preserveAspectRatio="xMinYMin meet" shapeRendering="crispEdges" className="h-full w-full" role="img" aria-label="单体楼给排水">
      <defs>
        <pattern id="hatch" width="9" height="9" patternUnits="userSpaceOnUse">
          <rect width="9" height="9" fill="#ff0" />
          <path d="M3 3h3v3H3z" fill="#000" />
        </pattern>
        <pattern id="stairs" width="8" height="10" patternUnits="userSpaceOnUse" patternTransform="rotate(-15)">
          <rect width="4" height="10" fill="#d99a6c" />
        </pattern>
      </defs>
      <g fill="none" stroke="#66cc80">
        <path d="M545,652L513,261L1427,270" />
        <path d="M1418,279L532,270L562,643L1449,652" />
      </g>
      <path d="M545,652L1461,661" stroke="#0f0" />
      <path d="M946,625h38M984,626h9M1022,631h12" stroke="#80f0a0" strokeWidth="2" />
      <path d="M940,628L1020,629M940,630L1020,632" stroke="#80f0a0" />
      <TitleBlock />
      <BlockB />
      <BlockA />
      <BlockC />
      {/* UCS axes */}
      <path d="M195,936L192,898" stroke="#0f0" strokeWidth="4" />
      <path d="M191,888l5,12h-8z" fill="#0f0" />
      <path d="M196,936h36" stroke="#f00" strokeWidth="4" />
      <path d="M242,936l-12,-5v10z" fill="#f00" />
      <path d="M195,936L206,926" stroke="#0080ff" strokeWidth="4" />
      <circle cx="207" cy="925" r="4" fill="#0080ff" />
      <g fontFamily="Lato, sans-serif" fontSize="13">
        <text x="200" y="901" fill="#0f0">Y</text>
        <text x="229" y="925" fill="#f00">X</text>
        <text x="197" y="926" fill="#0080ff">Z</text>
      </g>
    </svg>
  );
}

export default function App() {
  return (
    <div className="relative flex h-screen w-full flex-col overflow-hidden whitespace-nowrap bg-[#f0f0f0] font-['Open_Sans','Noto_Sans_CJK_SC',sans-serif] text-[12px] leading-4">
      <div className="flex h-[22px] shrink-0 items-center border-b border-[#24508c] bg-gradient-to-r from-[#9dbfe2] via-[#1c5fb4] via-30% to-[#1b509a]">
        <h1 className="-ml-2 font-['Inter','Noto_Sans_CJK_SC',sans-serif] text-black">广联达BIM安装算量软件GQI2015 - [D:\Documents\单体楼给排水.GQI3]</h1>
      </div>

      <nav className="flex h-[27px] shrink-0 items-center gap-[11px] bg-gradient-to-b from-[#f6f8fd] via-[#d6dded] via-40% to-[#d3daec] text-[#6d6d6d]">
        {MENUS.map((menu, i) => (
          <button key={menu} className={i === 0 ? '-ml-4' : ''}>{menu}</button>
        ))}
      </nav>

      <div className="flex h-[30px] shrink-0 items-start border-t border-[#c5c9d6] bg-[#f0f0f0]">
        <div className="flex h-7 min-w-0 flex-1 border-b border-t border-b-[#b9bfd2] border-t-white bg-[#d5dbee]">
          <div className="flex items-center border-r border-[#b9bfd2] bg-gradient-to-b from-[#d3daed] to-[#dee4f6] pl-1">
            <button aria-label="打开" className="mr-[3px] flex items-center gap-1"><Icon name="open" /><Caret /></button>
            <button aria-label="保存" className="mr-[6px]"><Icon name="save" /></button>
            <Divider />
            <button aria-label="撤销" className="mr-1 flex items-center gap-1 text-[#666]"><Icon name="undo" /><Caret /></button>
            <button aria-label="恢复" className="mr-[3px] flex items-center gap-1 text-[#666]"><Icon name="redo" /><Caret /></button>
            <Grip />
            <span className="w-[3px]" />
            <Tools
              items={[
                { icon: 'define', label: '定义', off: true },
                { icon: 'find', label: '查找图元' },
                { icon: 'sigma', label: '汇总计算' },
                { icon: 'calc', label: '计算式', off: true },
                { icon: 'batch', label: '批量选择' },
              ]}
            />
          </div>
        </div>
        <div className="flex h-7 w-[822px] shrink-0 items-center overflow-hidden border-b border-t border-b-[#b9bfd2] border-t-white bg-gradient-to-b from-[#d3daed] to-[#dee4f6] pl-[2px]">
          <Grip />
          <label className="mr-[5px] flex h-[22px] shrink-0 items-center bg-white pl-1">
            <Icon name="cube" />
            <select aria-label="视图模式" defaultValue="三维" className="h-5 w-[29px] appearance-none bg-white pl-[2px]">
              <option>三维</option>
            </select>
            <span className="flex h-[21px] w-[13px] items-center justify-center border border-[#707070] bg-[#e4e4e4]"><Caret /></span>
          </label>
          <Tools
            items={[
              { icon: 'topview', label: '俯视', caret: true },
              { icon: 'orbit', label: '动态观察', caret: true },
              { icon: 'area3d', label: '区域三维', off: true },
            ]}
          />
          <Divider />
          <Tools
            items={[
              { icon: 'full', label: '全屏' },
              { icon: 'zoom', label: '缩放', caret: true },
              { icon: 'pan', label: '平移', caret: true },
            ]}
          />
          <Divider />
          <Tools
            items={[
              { icon: 'floors', label: '选择楼层' },
              { icon: 'wire', label: '线框' },
              { icon: 'record', label: '记录管理', caret: true },
              { icon: 'check', label: '检查模型', caret: true },
              { icon: 'area', label: '区域管理' },
            ]}
          />
        </div>
      </div>

      <div className="flex min-h-0 flex-1">
        <Sidebar />
        <main className="ml-[5px] flex min-w-0 flex-1 flex-col overflow-hidden">
          <div className="flex h-7 shrink-0 items-center border-b border-[#d4d4d4] pl-[2px] pt-[2px]">
            <Grip />
            <Picker label="楼层" value="第2层" width="w-[46px]" />
            <Picker label="构件类型" value="CAD图管理" width="w-[56px]" />
            <Picker label="构件" value="CAD草图" width="w-[56px]" />
            <Picker label="图元" value="" width="w-[56px]" />
            <Divider />
            <Tools
              items={[
                { icon: 'props', label: '属性', off: true },
                { icon: 'pick', label: '拾取构件', off: true },
                { icon: 'brush', label: '图元属性刷', off: true },
              ]}
            />
            <Grip />
            <span className="w-[2px]" />
            <Tools items={[{ icon: 'remove', label: '删除' }]} />
            <Divider />
            <Tools
              items={[
                { icon: 'copy', label: '复制' },
                { icon: 'mirror', label: '镜像' },
              ]}
            />
            <Divider />
            <Tools
              items={[
                { icon: 'move', label: '移动' },
                { icon: 'rotate', label: '旋转' },
              ]}
            />
            <Divider />
            <Tools
              items={[
                { icon: 'extend', label: '延伸' },
                { icon: 'trim', label: '修剪' },
              ]}
            />
            <Divider />
            <Tools
              items={[
                { icon: 'breakIt', label: '打断' },
                { icon: 'join', label: '合并' },
              ]}
            />
            <Divider />
            <Tools
              items={[
                { icon: 'offset', label: '偏移' },
                { icon: 'stretch', label: '拉伸' },
              ]}
            />
            <span className="h-full w-px bg-[#d0d0d0]" />
          </div>

          <div className="flex h-7 shrink-0 items-center border-b border-[#d4d4d4] pl-[2px] pt-[2px]">
            <Grip />
            <button className="flex h-[21px] shrink-0 items-center gap-1 rounded-sm border-2 border-[#7a7a7a] bg-[#e2e2e2] px-[2px]">
              <Icon name="select" />
              <span>选择</span>
            </button>
            <button aria-label="选择方式" className="mr-px"><Caret /></button>
            <Divider />
            <div className="flex shrink-0 gap-px">
              <Tools
                items={[
                  { icon: 'sheets', label: '图纸管理' },
                  { icon: 'bim', label: '导入BIM模型', caret: true },
                  { icon: 'pdf', label: '导入PDF' },
                  { icon: 'importCad', label: '导入CAD图' },
                  { icon: 'line', label: '直线', off: true, caret: true },
                  { icon: 'arc', label: '三点画弧', off: true, caret: true },
                  { icon: 'rect', label: '矩形', off: true },
                  { icon: 'locate', label: '定位CAD图' },
                  { icon: 'insert', label: '插入CAD图' },
                  { icon: 'exportCad', label: '导出选中CAD图形' },
                  { icon: 'patch', label: '补画CAD线' },
                  { icon: 'explode', label: '分解CAD块' },
                  { icon: 'clear', label: '清除CAD图' },
                ]}
              />
            </div>
            <Grip />
            <span className="w-[2px]" />
            <Tools
              items={[
                { icon: 'cadSet', label: 'CAD操作设置', caret: true },
                { icon: 'brackets', label: 'CAD线打断', caret: true },
              ]}
            />
            <Divider />
            <Tools
              items={[
                { icon: 'annotate', label: '修改CAD标注' },
                { icon: 'ratio', label: '设置比例' },
              ]}
            />
            <Divider />
            <button aria-label="编辑图纸" className="shrink-0"><Icon name="edit" /></button>
          </div>

          <div className="mb-px min-h-0 flex-1 bg-black">
            <Drawing />
          </div>
        </main>
      </div>

      {/* hand drawn ring over the pickers */}
      <svg viewBox="0 0 322 74" className="pointer-events-none absolute left-[86px] top-[57px] h-[74px] w-[322px]" aria-hidden="true">
        <ellipse cx="161" cy="37" rx="157" ry="33" fill="none" stroke="#ed1c24" strokeWidth="6" />
      </svg>
    </div>
  );
}
